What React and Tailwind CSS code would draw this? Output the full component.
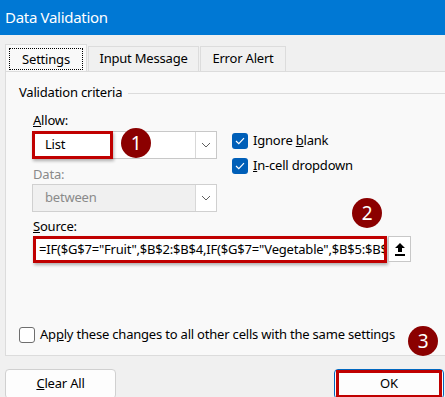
import React from 'react';

const font = { fontFamily: '"Noto Sans", "Open Sans", sans-serif' };

const Chevron = () => (
  <svg width="10" height="6" viewBox="0 0 10 6" fill="none">
    <path d="M1 1L5 5L9 1" stroke="#606060" strokeWidth="1" />
  </svg>
);

const Check = () => (
  <span className="w-[16px] h-[16px] rounded-[3px] bg-[#005fb8] flex items-center justify-center">
    <svg width="10" height="8" viewBox="0 0 10 8" fill="none">
      <path d="M1 4L3.8 6.6L9 1.2" stroke="white" strokeWidth="1.2" />
    </svg>
  </span>
);

const Badge = ({ n, className }) => (
  <div className={`absolute w-[30px] h-[30px] rounded-full bg-[#8b0000] text-white text-[19px] flex items-center justify-center ${className}`}>
    {n}
  </div>
);

export default function App() {
  return (
    <div className="relative w-[445px] h-[397px] bg-[#f0f0f0] overflow-hidden text-black tracking-[-0.2px]" style={font}>
      {/* title bar */}
      <div className="h-[35px] bg-[#0078d4] text-white text-[15px] tracking-[-0.3px] pl-[5px] flex items-center">Data Validation</div>

      {/* tabs */}
      <div className="mt-[9px] pl-[5px] flex items-end h-[27px] text-[13px]">
        <div className="w-[82px] h-[27px] bg-[#f9f9f9] border border-b-0 border-[#dcdcdc] flex items-center justify-center">
          <span className="border border-dotted border-black px-[12px] h-[22px] leading-[20px] mt-[2px]">Settings</span>
        </div>
        <div className="w-[111px] h-[25px] ml-px border border-b-0 border-[#dcdcdc] flex items-center justify-center">Input Message</div>
        <div className="w-[86px] h-[25px] ml-px border border-b-0 border-[#dcdcdc] flex items-center justify-center">Error Alert</div>
      </div>

      {/* panel */}
      <div className="ml-[5px] h-[285px] bg-[#f9f9f9] border border-r-0 border-[#dcdcdc] flex flex-col pl-[13px] pt-[11px] pb-[10px] text-[13px]">
        <div className="flex items-center h-[20px]">
          <span>Validation criteria</span>
          <div className="flex-1 h-px bg-[#dcdcdc] ml-[6px]" />
        </div>

        <div className="pl-[14px]">
          <div className="mt-[7px] h-[20px] leading-[20px]"><u>A</u>llow:</div>
          <div className="mt-[1px] flex h-[28px]">
            <div className="relative -ml-px w-[185px] h-[28px] bg-white border border-[#c8c8c8] flex">
              <div className="flex-1 pl-[12px] flex items-center">List</div>
              <div className="w-[21px] border-l border-[#d8d8d8] flex items-center justify-center"><Chevron /></div>
              <div className="absolute -left-px -top-px w-[81px] h-[28px] border-[3px] border-[#c00000] shadow-[1px_2px_3px_rgba(0,0,0,0.3)]" />
            </div>
            <div className="ml-[15px] mt-[2px] flex flex-col gap-[9px]">
              <label className="flex items-center gap-[5px] h-[16px]"><Check /><span>Ignore <u>b</u>lank</span></label>
              <label className="flex items-center gap-[5px] h-[16px]"><Check /><span><u>I</u>n-cell dropdown</span></label>
            </div>
          </div>

          <div className="mt-[5px] h-[20px] leading-[20px] text-[#8a8a8a]">Data:</div>
          <div className="-ml-px w-[185px] h-[28px] bg-[#f0f0f0] border border-[#d0d0d0] flex text-[#8a8a8a]">
            <div className="flex-1 pl-[12px] flex items-center">between</div>
            <div className="w-[21px] bg-white border-l border-[#d8d8d8] flex items-center justify-center"><Chevron /></div>
          </div>

          <div className="mt-[4px] h-[20px] leading-[20px]"><u>S</u>ource:</div>
          <div className="flex h-[27px]">
            <div className="w-[354px] h-[27px] bg-white border-[3px] border-[#c00000] shadow-[1px_2px_3px_rgba(0,0,0,0.3)] overflow-hidden whitespace-nowrap pl-[3px] flex items-center">
              =IF($G$7="Fruit",$B$2:$B$4,IF($G$7="Vegetable",$B$5:$B$7,""))
            </div>
            <div className="ml-px w-[23px] h-[26px] bg-white border border-[#c8c8c8] flex items-center justify-center">
              <svg width="10" height="13" viewBox="0 0 10 13">
                <path d="M5 0L10 5H7V9H3V5H0Z" fill="black" />
                <rect x="0" y="11" width="10" height="2" fill="black" />
              </svg>
            </div>
          </div>
        </div>

        <div className="mt-auto flex items-center h-[20px]">
          <span className="w-[16px] h-[16px] rounded-[3px] border border-[#6e6e6e] bg-white" />
          <span className="ml-[5px]">Ap<u>p</u>ly these changes to all other cells with the same settings</span>
        </div>
      </div>

      {/* buttons */}
      <div className="mt-[13px] flex text-[13px]">
        <div className="ml-[5px] w-[111px] h-[30px] bg-[#fdfdfd] border border-[#d0d0d0] rounded-[4px] flex items-center justify-center">
          <span><u>C</u>lear All</span>
        </div>
        <div className="relative ml-[218px] w-[110px] h-[30px] bg-[#fdfdfd] border border-[#0067c0] rounded-[4px] flex items-center justify-center">
          <span>OK</span>
          <div className="absolute left-[1px] top-0 w-[106px] h-[28px] border-[3px] border-[#c00000]" />
        </div>
      </div>

      <Badge n="1" className="left-[121px] top-[128px]" />
      <Badge n="2" className="left-[352px] top-[198px]" />
      <Badge n="3" className="left-[408px] top-[326px]" />
    </div>
  );
}
